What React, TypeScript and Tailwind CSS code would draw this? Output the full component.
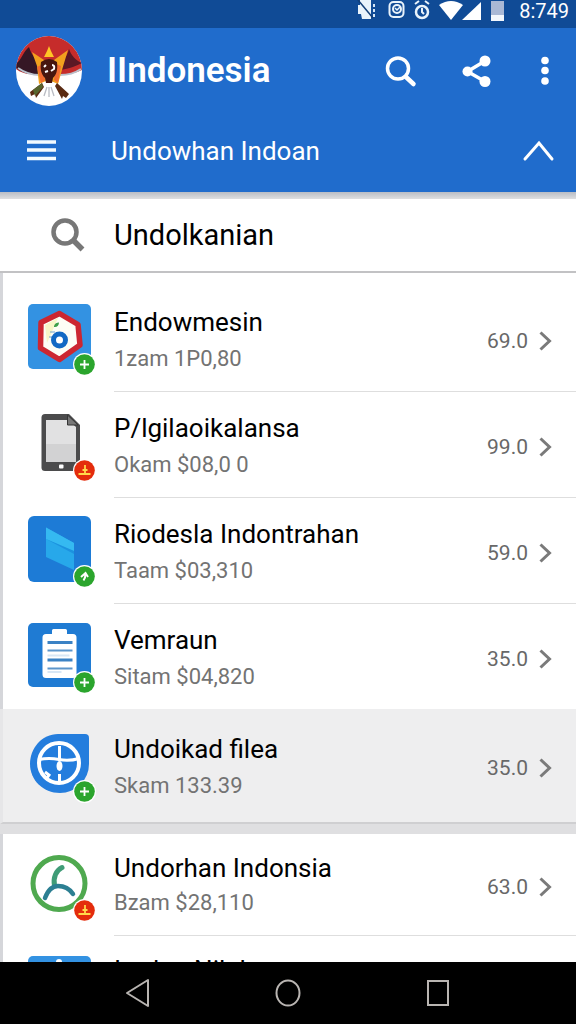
import React from "react";

type BadgeKind = "plus" | "arrow" | "red";

interface Entry {
  title: string;
  detail: string;
  price: string;
  badge: BadgeKind;
  art: React.ReactNode;
}

function Badge({ kind }: { kind: BadgeKind }) {
  const red = kind === "red";
  return (
    <g>
      <circle cx="56.5" cy="60.5" r="11.5" fill="#fff" />
      <circle cx="56.5" cy="60.5" r="10.3" fill={red ? "#e42c0c" : "#2ba52d"} />
      {kind === "plus" && <path d="M56.5 56v9M52 60.5h9" stroke="#fff" strokeWidth="1.8" />}
      {kind === "arrow" && (
        <path d="M53 61l4.500-4 2.500 4M57.5 57.5c0 3-.5 5-2 7" fill="none" stroke="#fff" strokeWidth="2" />
      )}
      {red && <path d="M57 55v9M54.500 60h5M50.500 64h12" fill="none" stroke="#ffd84a" strokeWidth="1.800" />}
    </g>
  );
}

const HexArt = (
  <g>
    <rect width="63" height="65" rx="5" fill="#3392e2" />
    <path d="M31.500 9.500L50 20.500L52 41L31.500 55.500L12.500 44L13 18.500Z" fill="#fdfdf5" stroke="#cc2731" strokeWidth="5.500" strokeLinejoin="round" />
    <path d="M17 21l13-7-11 25z" fill="#f8f6c8" />
    <path d="M26 22c1-3 2.500-3.500 5-3.500 0 3-2 5-5 4.500z" fill="#3e9f4a" />
    <path d="M22 28h5M21 33h4" stroke="#70a4cf" strokeWidth="1" />
    <circle cx="31.500" cy="36" r="6" fill="#fff" stroke="#1269c4" strokeWidth="5" />
  </g>
);

const PhoneArt = (
  <g>
    <path d="M17 4h24l11 11v43a3 3 0 0 1-3 3H17a3.500 3.500 0 0 1-3.500-3.500v-50A3.500 3.500 0 0 1 17 4z" fill="#4b4b4c" />
    <path d="M18 10h22l8 7v35H18z" fill="#e1e1e2" />
    <path d="M18 34h30v18H18z" fill="#d2d2d3" />
    <path d="M39.500 5v10H50z" fill="#777" stroke="#353535" strokeWidth="1" />
    <rect x="31" y="54.500" width="4.500" height="4" rx="1" fill="#fff" />
  </g>
);

const SheetArt = (
  <g>
    <rect width="63" height="66" rx="6" fill="#1d7bd6" />
    <path d="M18 11.500L46 27v27L18 41z" fill="#27a8ea" />
    <path d="M18 11.500L46 27v8L18 23z" fill="#35b9f1" />
    <path d="M18 23l28 12v3z" fill="#1c92df" />
  </g>
);

const ClipArt = (
  <g>
    <rect y="1" width="63" height="64" rx="5" fill="#1f7bd3" />
    <path d="M18 12h6V8.500a1.500 1.500 0 0 1 1.500-1.500h12a1.500 1.500 0 0 1 1.500 1.500V12h6a3.500 3.500 0 0 1 3.500 3.500v37a3.500 3.500 0 0 1-3.500 3.500H18a3.500 3.500 0 0 1-3.500-3.500v-37A3.500 3.500 0 0 1 18 12z" fill="#fff" />
    <path d="M19.500 20.500h25M19.500 38h25" stroke="#3b82c4" strokeWidth="3" />
    <path d="M19.500 28.500h25M19.500 46.500h25" stroke="#5b95cb" strokeWidth="2" />
    <path d="M19.500 33.500h22M19.500 50h14" stroke="#d8e7f5" strokeWidth="2" />
  </g>
);

const CompassArt = (
  <g>
    <path d="M30 3h27a4 4 0 0 1 4 4v26A29 29 0 0 1 32 62C15 62 2 49 2 33S14 3 30 3z" fill="#247ddd" />
    <circle cx="31" cy="32" r="20" fill="none" stroke="#fff" strokeWidth="4" />
    <path d="M11 28.500q10-2 20 0t20-1" fill="none" stroke="#fff" strokeWidth="3" />
    <path d="M31.500 15v14M31.500 43v8M17 41l4 3-2 3" fill="none" stroke="#fff" strokeWidth="3" />
    <ellipse cx="31.500" cy="35" rx="3" ry="5" fill="#fff" />
  </g>
);

const RingArt = (
  <g>
    <circle cx="31" cy="33.500" r="26" fill="#fff" stroke="#4fa94f" strokeWidth="5" />
    <path d="M34 17.500c-6 3-9 10-7.500 18" fill="none" stroke="#3f9c77" strokeWidth="5" strokeLinecap="round" />
    <path d="M17 48c3-8 7-12 13-12s11 2 15 8" fill="none" stroke="#2c7f92" strokeWidth="4.500" strokeLinecap="round" />
  </g>
);

const PartialArt = (
  <g>
    <rect y="4" width="63" height="65" rx="5" fill="#3392e2" />
    <circle cx="31" cy="10" r="3" fill="#fff" />
  </g>
);

const mainEntries: Entry[] = [
  { title: "Endowmesin", detail: "1zam 1P0,80", price: "69.0", badge: "plus", art: HexArt },
  { title: "P/lgilaoikalansa", detail: "Okam $08,0 0", price: "99.0", badge: "red", art: PhoneArt },
  { title: "Riodesla Indontrahan", detail: "Taam $03,310", price: "59.0", badge: "arrow", art: SheetArt },
  { title: "Vemraun", detail: "Sitam $04,820", price: "35.0", badge: "plus", art: ClipArt },
];

const fileEntry: Entry = {
  title: "Undoikad filea",
  detail: "Skam 133.39",
  price: "35.0",
  badge: "plus",
  art: CompassArt,
};

const moreEntries: Entry[] = [
  { title: "Undorhan Indonsia", detail: "Bzam $28,110", price: "63.0", badge: "red", art: RingArt },
  { title: "Iordan Nilal", detail: "Skam $28,110", price: "63.0", badge: "plus", art: PartialArt },
];

function Row({ entry, divider, compact }: { entry: Entry; divider: boolean; compact?: boolean }) {
  return (
    <li>
      <a href="#" className="flex items-center gap-[18px] pl-[25px]">
        <svg viewBox="0 0 68 74" className="mt-1 h-[74px] w-[68px] shrink-0" aria-hidden="true">
          {entry.art}
          <Badge kind={entry.badge} />
        </svg>
        <div
          className={
            divider
              ? "flex min-w-0 flex-1 items-center border-b border-[#dedede] pb-[14px] pr-5 pt-[18px]"
              : "flex min-w-0 flex-1 items-center pb-[14px] pr-5 pt-[18px]"
          }
        >
          <div className="min-w-0 flex-1">
            <p
              className={
                compact
                  ? "truncate text-[26px] leading-[33px] text-black"
                  : "truncate text-[26px] leading-[37px] text-black"
              }
            >
              {entry.title}
            </p>
            <p className="truncate text-[22px] leading-9 text-[#737373]">{entry.detail}</p>
          </div>
          <span className="text-[21px] leading-9 text-[#686868]">{entry.price}</span>
          <svg viewBox="0 0 20 24" className="ml-2 h-6 w-5" fill="none" stroke="#7a7a7a" strokeWidth="3" aria-hidden="true">
            <path d="M4.500 3.500l9 8.500-9 8.500" />
          </svg>
        </div>
      </a>
    </li>
  );
}

function StatusBar() {
  return (
    <div className="flex h-7 shrink-0 items-start justify-end gap-[3px] bg-[#104b96] pr-[7px] text-white">
      <svg viewBox="0 0 160 28" className="h-7 w-40" aria-hidden="true">
        <path d="M4 0h11v19H6l-1-5H2V5h2z" fill="#e9f3fb" />
        <path d="M2 0l15 18" stroke="#123f78" strokeWidth="1.500" />
        <path d="M18 4v3M18 9v3M18 14v3" stroke="#d4e5f5" strokeWidth="2" />
        <rect x="33.500" y="2" width="14" height="15" rx="4" fill="none" stroke="#e9f3fb" strokeWidth="2" />
        <circle cx="41" cy="9" r="4" fill="none" stroke="#e9f3fb" strokeWidth="2" />
        <path d="M39 8l2 2 3-3" fill="none" stroke="#e9f3fb" strokeWidth="1.500" />
        <circle cx="66" cy="12" r="6" fill="none" stroke="#e9f3fb" strokeWidth="2.500" />
        <path d="M59 4l4-3M73 4l-4-3M66 8v4l2 2" fill="none" stroke="#e9f3fb" strokeWidth="2" />
        <path d="M83 5Q95-3 107 5L95 20z" fill="#fff" />
        <path d="M125 2v18h-19z" fill="#fff" />
        <path d="M135 1h13v16h-13z" fill="#a9b8d5" />
        <path d="M135 15h13v6h-13z" fill="#f3f7fc" />
      </svg>
      <span className="text-[20px] leading-[22px]">8:749</span>
    </div>
  );
}

function Avatar() {
  return (
    <svg viewBox="0 0 66 70" className="h-[70px] w-[66px] shrink-0" role="img" aria-label="Profile">
      <defs>
        <clipPath id="avatar-clip">
          <ellipse cx="33" cy="35" rx="33" ry="35" />
        </clipPath>
      </defs>
      <g clipPath="url(#avatar-clip)">
        <rect width="66" height="70" fill="#fff" />
        <path d="M0 0h66v34c-9 4-15 5-20 4H20C12 39 5 37 0 33z" fill="#c62c2b" />
        <path d="M0 28c6-5 7-12 13-17 3 9 7 13 13 17v11C15 39 7 37 0 32z" fill="#351725" />
        <path d="M66 27c-6-2-11-8-13-14-2 9-7 12-13 15v6c10 0 18-3 26-7z" fill="#5b1925" />
        <path d="M2 32c7 5 14 7 22 7M44 39c8 0 15-2 21-6" fill="none" stroke="#b9c0cb" strokeWidth="2" />
        <path d="M16 16l12 8h10l14-10-6 20-4 14-7-3H30l-7 3-2-18z" fill="#f2a11e" />
        <path d="M28 21l3-6 2-5 2 5 3 6z" fill="#ffc425" />
        <path d="M21 31l4 16 4-3-2-16zM45 30l-3 17-4-3 2-16z" fill="#f06b31" />
        <path d="M25 26q8-6 16 0c1 9-1 13-4 16l-1 5h-6l-1-5c-4-4-5-9-4-16z" fill="#46160f" />
        <path d="M26 47l-12 9 1 4 4-2 1 4 8-11zM41 47l12 11-3 4-3-2-1 3-7-13z" fill="#5a2b13" />
        <path d="M26 47l-9 7 2 6 8-9z" fill="#56652e" />
        <path d="M31 51l-3 9M33 51v10M35 51l3 9" stroke="#b9bcc3" strokeWidth="1.300" />
        <path d="M30 29l-2 2M29 36l3-1M36 29q3 0 2 4l-3 2" fill="none" stroke="#fff" strokeWidth="2" />
      </g>
    </svg>
  );
}

function Header() {
  return (
    <header className="shrink-0 bg-[#206ccc] pb-[5px] text-white">
      <div className="flex h-[86px] items-center pl-4">
        <Avatar />
        <h1 className="ml-[25px] min-w-0 flex-1 truncate text-[35px] font-semibold leading-[42px]">IIndonesia</h1>
        <button type="button" aria-label="Search" className="shrink-0">
          <svg viewBox="0 0 36 36" className="h-9 w-9" fill="none" stroke="#fff" strokeLinecap="round">
            <circle cx="15" cy="15.500" r="10.500" strokeWidth="3.500" />
            <path d="M23 24l7.500 7" strokeWidth="4.500" />
          </svg>
        </button>
        <button type="button" aria-label="Share" className="ml-10 shrink-0">
          <svg viewBox="0 0 36 36" className="h-9 w-9" fill="#fff">
            <path d="M26 8L8.500 18.500L26 28.500" fill="none" stroke="#fff" strokeWidth="3.500" />
            <circle cx="26" cy="8" r="5.500" />
            <circle cx="8.500" cy="18.500" r="5" />
            <circle cx="26" cy="28.500" r="5.500" />
          </svg>
        </button>
        <button type="button" aria-label="More options" className="ml-8 mr-[13px] shrink-0">
          <svg viewBox="0 0 36 36" className="h-9 w-9" fill="#fff">
            <circle cx="18" cy="7.500" r="3.800" />
            <circle cx="18" cy="17.500" r="3.800" />
            <circle cx="18" cy="28" r="3.800" />
          </svg>
        </button>
      </div>
      <div className="flex h-[73px] items-center pl-6">
        <button type="button" aria-label="Menu" className="shrink-0">
          <svg viewBox="0 0 36 36" className="h-9 w-9" stroke="#f3faff" strokeWidth="3.500">
            <path d="M3 9h29M3 17h29M3 25.500h29" />
          </svg>
        </button>
        <h2 className="ml-[51px] min-w-0 flex-1 truncate text-[26px] leading-9">Undowhan Indoan</h2>
        <button type="button" aria-label="Collapse" className="mr-5 shrink-0">
          <svg viewBox="0 0 36 36" className="h-9 w-9" fill="none" stroke="#fff" strokeWidth="3" strokeLinecap="round">
            <path d="M5 26L19 10l13 16" />
          </svg>
        </button>
      </div>
    </header>
  );
}

function NavBar() {
  return (
    <nav className="flex h-[62px] shrink-0 items-center justify-center gap-[114px] bg-black">
      <button type="button" aria-label="Back">
        <svg viewBox="0 0 36 36" className="h-9 w-9" fill="none" stroke="#b9b5b2" strokeWidth="2" strokeLinejoin="round">
          <path d="M28 5v26L7 18z" />
        </svg>
      </button>
      <button type="button" aria-label="Home">
        <svg viewBox="0 0 36 36" className="h-9 w-9" fill="none" stroke="#b9b5b2" strokeWidth="2">
          <ellipse cx="18" cy="18" rx="11.500" ry="12.500" />
        </svg>
      </button>
      <button type="button" aria-label="Recent apps">
        <svg viewBox="0 0 36 36" className="h-9 w-9" fill="none" stroke="#b9b5b2" strokeWidth="2">
          <rect x="8" y="6" width="20" height="24" />
        </svg>
      </button>
    </nav>
  );
}

export default function App() {
  return (
    <div className="flex h-screen flex-col overflow-hidden bg-white font-['Roboto',sans-serif]">
      <StatusBar />
      <Header />
      <div className="h-[7px] shrink-0 bg-linear-to-b from-[#b9bdc5] to-[#dedfe1]" />
      <div className="flex shrink-0 items-center border-b-2 border-[#c2c2c4] bg-white py-4 pl-12">
        <svg viewBox="0 0 40 40" className="h-10 w-10 shrink-0" fill="none" stroke="#777" aria-hidden="true">
          <circle cx="17" cy="17" r="11.500" strokeWidth="4.500" />
          <path d="M25 25l9.500 9.500" strokeWidth="5.500" />
        </svg>
        <input
          type="text"
          aria-label="Search list"
          defaultValue="Undolkanian"
          className="ml-[26px] min-w-0 flex-1 bg-transparent text-[29px] leading-9 text-black outline-none"
        />
      </div>
      <main className="min-h-0 flex-1 overflow-hidden bg-[#dfdfe1]">
        <ul className="border-l-[3px] border-[#d5d6da] bg-white pt-[13px]">
          {mainEntries.map((entry, i) => (
            <Row key={entry.title} entry={entry} divider={i < mainEntries.length - 1} />
          ))}
        </ul>
        <ul className="border-b-2 border-l-[3px] border-b-[#cfcfd1] border-l-[#e6e6e8] bg-[#eeeeef] py-1">
          <Row entry={fileEntry} divider={false} />
        </ul>
        <ul className="mt-[10px] border-l-[3px] border-[#d5d6da] bg-white">
          {moreEntries.map((entry) => (
            <Row key={entry.title} entry={entry} divider compact />
          ))}
        </ul>
      </main>
      <NavBar />
    </div>
  );
}
